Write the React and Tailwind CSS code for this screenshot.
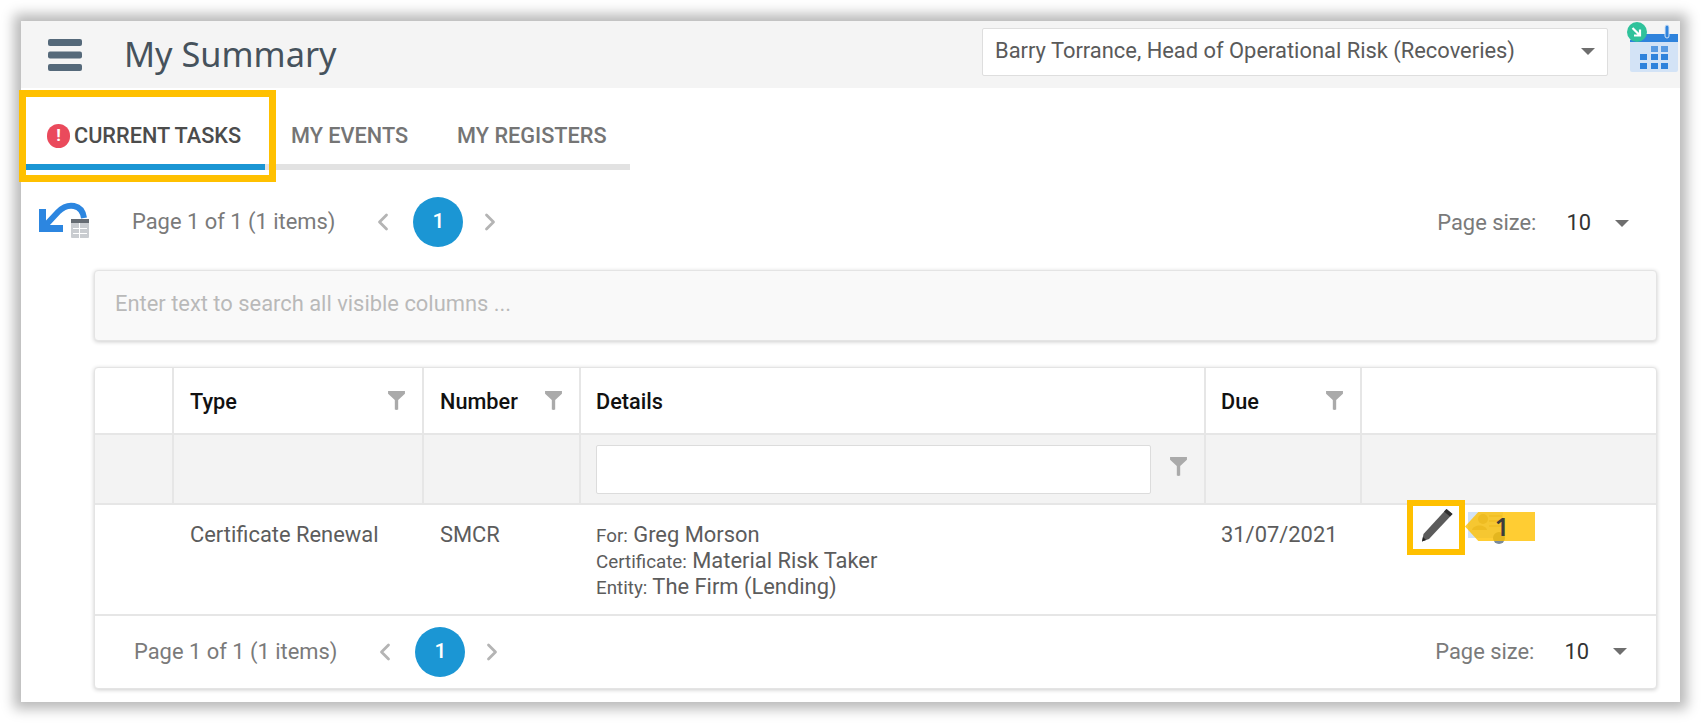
import { ChevronLeft, ChevronRight } from "lucide-react";

const Funnel = ({ className = "" }) => (
  <svg viewBox="0 0 16 18" className={"w-[17px] h-[19px] " + className}>
    <path d="M0 0h16v2.5L9.6 8.5V17.5L8 18 6.4 17.5V8.5L0 2.5z" fill="#aaaaaa" />
  </svg>
);

const Caret = ({ className = "" }) => (
  <div
    className={
      "w-0 h-0 border-x-[7px] border-x-transparent border-t-[7px] border-t-[#6e6e6e] " + className
    }
  ></div>
);

const Pager = ({ textMl, chevMl, sizeMr, sizeGap }) => (
  <div className="flex items-center flex-grow">
    <span className={"text-[21.900px] text-[#7a7a7a] " + textMl}>Page 1 of 1 (1 items)</span>
    <ChevronLeft className={"w-7 h-7 text-[#b4b4b4] " + chevMl} strokeWidth={2.4} />
    <div className="w-[50px] h-[50px] rounded-full bg-[#1b96d4] text-white text-[21px] font-medium flex items-center justify-center ml-[16px]">
      1
    </div>
    <ChevronRight className="w-7 h-7 text-[#b4b4b4] ml-[13px]" strokeWidth={2.4} />
    <div className={"ml-auto flex items-center " + sizeMr}>
      <span className="text-[21.900px] text-[#7a7a7a]">Page size:</span>
      <span className={"text-[21.900px] text-[#333] " + sizeGap}>10</span>
      <Caret className="ml-[24px]" />
    </div>
  </div>
);

const App = () => {
  return (
    <div className="w-[1702px] h-[723px] bg-white overflow-hidden pt-[21px] pl-[21px] font-['Roboto',sans-serif]">
      <div className="relative w-[1659px] h-[681px] bg-white shadow-[0_0_12px_7px_rgba(0,0,0,0.28)]">
        {/* header */}
        <div className="flex items-center h-[67px] bg-[#f4f4f4]">
          <div className="w-[99px] h-full bg-[#f5f5f5] flex items-center pl-[27px]">
            <svg viewBox="0 0 34 32" className="w-[34px] h-[32px]">
              <rect x="0" y="0" width="34" height="7" rx="2" fill="#55697a" />
              <rect x="0" y="12.5" width="34" height="7" rx="2" fill="#55697a" />
              <rect x="0" y="25" width="34" height="7" rx="2" fill="#55697a" />
            </svg>
          </div>
          <h1 className="ml-[4px] text-[34.300px] leading-none font-['Noto_Sans',sans-serif] text-[#46525c]">
            My Summary
          </h1>
          <div className="ml-auto -mt-[6px] w-[626px] h-[48px] bg-white border border-[#dedede] rounded-[2px] flex items-center pl-[12px] pr-[12px]">
            <span className="text-[21.900px] text-[#5a5a5a]">
              Barry Torrance, Head of Operational Risk (Recoveries)
            </span>
            <Caret className="ml-auto" />
          </div>
          <svg viewBox="0 0 52 50" className="w-[52px] h-[50px] ml-[18px] mr-[2px] -mt-[15px]">
            <rect x="4" y="13" width="48" height="37" rx="2" fill="#d3e3f6" />
            <path d="M18 12h34v8H4v-2z" fill="#2f83dc" />
            <rect x="39" y="3" width="4" height="13" rx="2" fill="#2f83dc" stroke="#d3e3f6" strokeWidth="1" />
            <g fill="#2f83dc">
              <rect x="25" y="24" width="7" height="6" opacity="0.75" />
              <rect x="35" y="24" width="7" height="6" opacity="0.75" />
              <rect x="14" y="32" width="7" height="6" />
              <rect x="25" y="32" width="7" height="6" />
              <rect x="35" y="32" width="7" height="6" />
              <rect x="14" y="41" width="7" height="6" />
              <rect x="25" y="41" width="7" height="6" />
              <rect x="35" y="41" width="7" height="6" />
            </g>
            <circle cx="11" cy="10" r="10" fill="#2fc29b" />
            <path d="M6.500 6l7 7M14 7.500V13.500H8" stroke="#fff" strokeWidth="2.200" fill="none" />
          </svg>
        </div>

        {/* tabs */}
        <div className="h-[82px] flex items-end pl-[4px]">
          <div className="flex w-[605px] border-b-[6px] border-[#e2e2e2] text-[21.700px] font-medium text-[#757575] h-[60px]">
            <div className="w-[240px] h-[60px] border-b-[6px] border-[#1b96d4] flex items-start pt-[10px] pl-[22px] gap-[4px] text-[#4c4c4c]">
              <div className="w-[23px] h-[24px] mt-[4px] rounded-full bg-[#ea4a5c] text-white text-[17px] font-bold flex items-center justify-center">
                !
              </div>
              <span>CURRENT TASKS</span>
            </div>
            <span className="ml-[26px] pt-[10px]">MY EVENTS</span>
            <span className="ml-[49px] pt-[10px]">MY REGISTERS</span>
          </div>
        </div>
        <div className="absolute left-[-2px] top-[69px] w-[257px] h-[92px] border-[7px] border-[#ffc000]"></div>

        {/* top pager */}
        <div className="flex items-center h-[50px] mt-[27px] pl-[17px]">
          <svg viewBox="0 0 52 38" className="w-[52px] h-[38px] -mt-[6px]">
            <path d="M6 27L20 12C30 2 44 4 46 18" stroke="#2c86e0" strokeWidth="6" fill="none" />
            <path d="M1 9H8V25H25V32H1z" fill="#2c86e0" />
            <rect x="33" y="19" width="18" height="19" rx="1" fill="#c9ccd0" />
            <rect x="33" y="19" width="18" height="4" fill="#666c73" />
            <g fill="#fff">
              <rect x="41" y="23" width="1" height="15" />
              <rect x="35" y="28" width="14" height="1" />
              <rect x="35" y="33" width="14" height="1" />
            </g>
          </svg>
          <Pager textMl="ml-[42px]" chevMl="ml-[34px]" sizeMr="mr-[51px] mt-[3px]" sizeGap="ml-[30px]" />
        </div>

        {/* search */}
        <div className="ml-[73px] mr-[23px] mt-[23px] h-[71px] bg-[#f9f9f9] border border-[#e4e4e4] rounded-[4px] shadow-[0_1px_4px_rgba(0,0,0,0.2)] flex items-center pl-[20px] pb-[3px]">
          <span className="text-[21.900px] text-[#b9b9b9]">Enter text to search all visible columns ...</span>
        </div>

        {/* table */}
        <div className="ml-[73px] mr-[23px] mt-[26px] h-[322px] bg-white border border-[#e4e4e4] rounded-[4px] shadow-[0_1px_4px_rgba(0,0,0,0.2)] flex flex-col">
          <div className="grid grid-cols-[77px_250px_157px_625px_156px_1fr] h-[67px] border-b-2 border-[#e6e6e6] text-[21.700px] font-medium text-[#111] items-stretch">
            <div></div>
            <div className="border-l-2 border-[#e6e6e6] flex items-center pl-[16px] pr-[17px]">
              <span className="pt-[3px]">Type</span>
              <Funnel className="ml-auto" />
            </div>
            <div className="border-l-2 border-[#e6e6e6] flex items-center pl-[16px] pr-[17px]">
              <span className="pt-[3px]">Number</span>
              <Funnel className="ml-auto" />
            </div>
            <div className="border-l-2 border-[#e6e6e6] flex items-center pl-[15px]">
              <span className="pt-[3px]">Details</span>
            </div>
            <div className="border-l-2 border-[#e6e6e6] flex items-center pl-[15px] pr-[17px]">
              <span className="pt-[3px]">Due</span>
              <Funnel className="ml-auto" />
            </div>
            <div className="border-l-2 border-[#e6e6e6]"></div>
          </div>

          <div className="grid grid-cols-[77px_250px_157px_625px_156px_1fr] h-[70px] border-b-2 border-[#e6e6e6] bg-[#f3f3f3]">
            <div></div>
            <div className="border-l-2 border-[#e6e6e6]"></div>
            <div className="border-l-2 border-[#e6e6e6]"></div>
            <div className="border-l-2 border-[#e6e6e6] flex items-center pl-[15px] pr-[17px]">
              <div className="w-[555px] h-[49px] bg-white border border-[#dcdcdc] rounded-[2px]"></div>
              <Funnel className="ml-auto -mt-[5px]" />
            </div>
            <div className="border-l-2 border-[#e6e6e6]"></div>
            <div className="border-l-2 border-[#e6e6e6]"></div>
          </div>

          <div className="grid grid-cols-[77px_250px_157px_625px_156px_1fr] h-[111px] border-b-2 border-[#e6e6e6] text-[21.900px] text-[#5c5c5c]">
            <div></div>
            <div className="pl-[18px] pt-[14px]">Certificate Renewal</div>
            <div className="pl-[18px] pt-[14px]">SMCR</div>
            <div className="pl-[17px] pt-[17px]">
              <div className="h-[26px] leading-[26px]">
                <span className="text-[18.800px]">For:</span> Greg Morson
              </div>
              <div className="h-[26px] leading-[26px]">
                <span className="text-[18.800px]">Certificate:</span> Material Risk Taker
              </div>
              <div className="h-[26px] leading-[26px]">
                <span className="text-[18.800px]">Entity:</span> The Firm (Lending)
              </div>
            </div>
            <div className="pl-[17px] pt-[14px]">31/07/2021</div>
            <div className="relative">
              <svg viewBox="0 0 32 34" className="absolute left-[61px] top-[3px] w-[32px] h-[34px]">
                <path d="M25.500 1l6 5L8 31 1 33.500 2.500 26z" fill="#5b5b5b" />
                <path d="M25.500 1l6 5-2.500 2.500-6-5z" fill="#2e2e2e" />
                <path d="M1 33.500L2 29l3 3z" fill="#222" />
              </svg>
              <svg viewBox="0 0 40 36" className="absolute left-[108px] top-[7px] w-[40px] h-[36px]">
                <rect x="0" y="0" width="35" height="26" fill="#d3e3f6" />
                <circle cx="15" cy="7" r="5" fill="#a8a8a8" />
                <path d="M4 18c1-6 14-6 15 0z" fill="#a8a8a8" />
                <path d="M21 4h13M21 9h13M21 14h13" stroke="#bcbcbc" strokeWidth="2" />
                <circle cx="31" cy="26" r="6" fill="#7a8a99" />
              </svg>
              <div className="absolute left-[47px] top-[-5px] w-[58px] h-[55px] border-[6px] border-[#ffc000]"></div>
              <div className="absolute left-[105px] top-[7px] w-[70px] h-[29px] bg-[#ffc000]/80 [clip-path:polygon(0_50%,19%_0,100%_0,100%_100%,19%_100%)] flex items-center justify-center pl-[4px]">
                <span className="text-[25px] font-semibold font-['Noto_Sans',sans-serif] text-[#3c3c3c] leading-none">1</span>
              </div>
            </div>
          </div>

          <div className="flex items-center flex-grow">
            <Pager textMl="ml-[39px]" chevMl="ml-[34px]" sizeMr="mr-[29px]" sizeGap="ml-[30px]" />
          </div>
        </div>
      </div>
    </div>
  );
};
export default App;
